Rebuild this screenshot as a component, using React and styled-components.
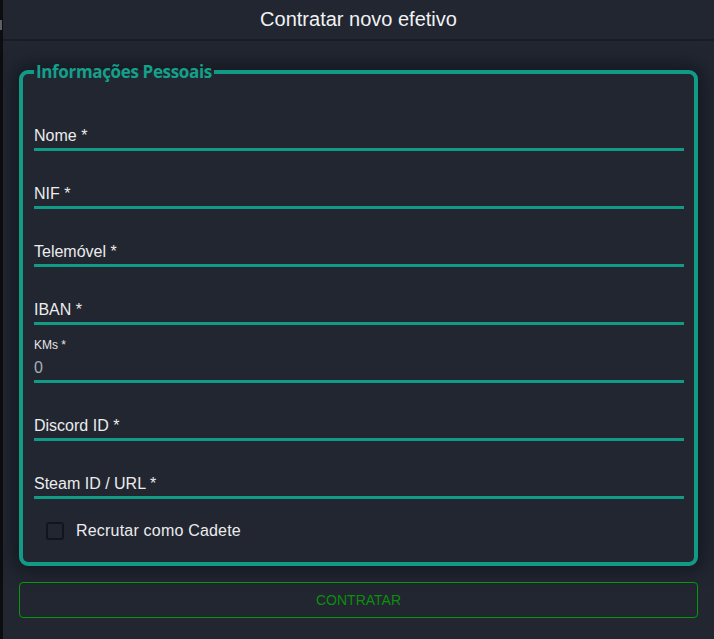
import styled, { createGlobalStyle } from "styled-components";

const Global = createGlobalStyle`
  html, body {
    margin: 0;
    padding: 0;
    background: #212631;
    font-family: "Liberation Sans", Arial, sans-serif;
  }
`;

const Page = styled.div`
  display: flex;
  min-height: 639px;
  background: #212631;
`;

const Edge = styled.div`
  width: 3px;
  flex-shrink: 0;
  background: #0c0d0f;
  display: flex;
  flex-direction: column;
`;

const EdgeMark = styled.span`
  width: 2px;
  height: 10px;
  margin-top: 20px;
  background: #5d5f63;
`;

const Main = styled.main`
  flex: 1;
  display: flex;
  flex-direction: column;
`;

const Header = styled.header`
  height: 39px;
  border-bottom: 2px solid #181c23;
  display: flex;
  align-items: center;
  justify-content: center;
  h1 {
    margin: 0;
    font-size: 20px;
    font-weight: 400;
    color: #f2f2f2;
  }
`;

const Body = styled.div`
  padding: 19px 16px 0 16px;
  display: flex;
  flex-direction: column;
`;

const Group = styled.fieldset`
  margin: 0;
  padding: 0 10px 11px 11px;
  border: 4px solid #119a85;
  border-radius: 9px;
  box-shadow: 0 0 18px 4px rgba(8, 10, 14, 0.55);
  legend {
    padding: 0 2px;
    font-family: "Open Sans", sans-serif;
    font-weight: 700;
    font-size: 17px;
    letter-spacing: -0.35px;
    color: #14a08a;
  }
`;

const Fields = styled.div`
  padding-top: 10px;
  display: flex;
  flex-direction: column;
`;

const Field = styled.label`
  height: 58px;
  display: flex;
  flex-direction: column;
  justify-content: flex-end;
  border-bottom: 3px solid #119a85;
  box-sizing: border-box;
  padding-bottom: 3px;
`;

const Small = styled.span`
  font-size: 12px;
  color: #e6e6e6;
  margin-bottom: 6px;
`;

const Value = styled.span`
  font-size: 16px;
  line-height: 19px;
  color: ${(p) => (p.$muted ? "#a9adb4" : "#ececec")};
`;

const CheckRow = styled.label`
  margin-top: 12px;
  height: 40px;
  padding-left: 12px;
  display: flex;
  align-items: center;
  gap: 12px;
  font-size: 16px;
  letter-spacing: 0.2px;
  color: #ececec;
`;

const Box = styled.span`
  width: 14px;
  height: 14px;
  border: 2px solid #12161c;
  border-radius: 3px;
  background: #212631;
`;

const Submit = styled.button`
  margin-top: 16px;
  height: 36px;
  border: 1px solid #089808;
  border-radius: 4px;
  background: transparent;
  color: #0c8f0c;
  font-family: "Liberation Sans", Arial, sans-serif;
  font-size: 14px;
  text-transform: uppercase;
`;

const fields = [
  { label: "Nome *" },
  { label: "NIF *" },
  { label: "Telemóvel *" },
  { label: "IBAN *" },
  { label: "KMs *", value: "0" },
  { label: "Discord ID *" },
  { label: "Steam ID / URL *" },
];

export default function App() {
  return (
    <>
      <Global />
      <Page>
        <Edge>
          <EdgeMark />
        </Edge>
        <Main>
          <Header>
            <h1>Contratar novo efetivo</h1>
          </Header>
          <Body>
            <Group>
              <legend>Informações Pessoais</legend>
              <Fields>
                {fields.map((f) =>
                  f.value ? (
                    <Field key={f.label}>
                      <Small>{f.label}</Small>
                      <Value $muted>{f.value}</Value>
                    </Field>
                  ) : (
                    <Field key={f.label}>
                      <Value>{f.label}</Value>
                    </Field>
                  )
                )}
              </Fields>
              <CheckRow>
                <Box />
                Recrutar como Cadete
              </CheckRow>
            </Group>
            <Submit>Contratar</Submit>
          </Body>
        </Main>
      </Page>
    </>
  );
}
